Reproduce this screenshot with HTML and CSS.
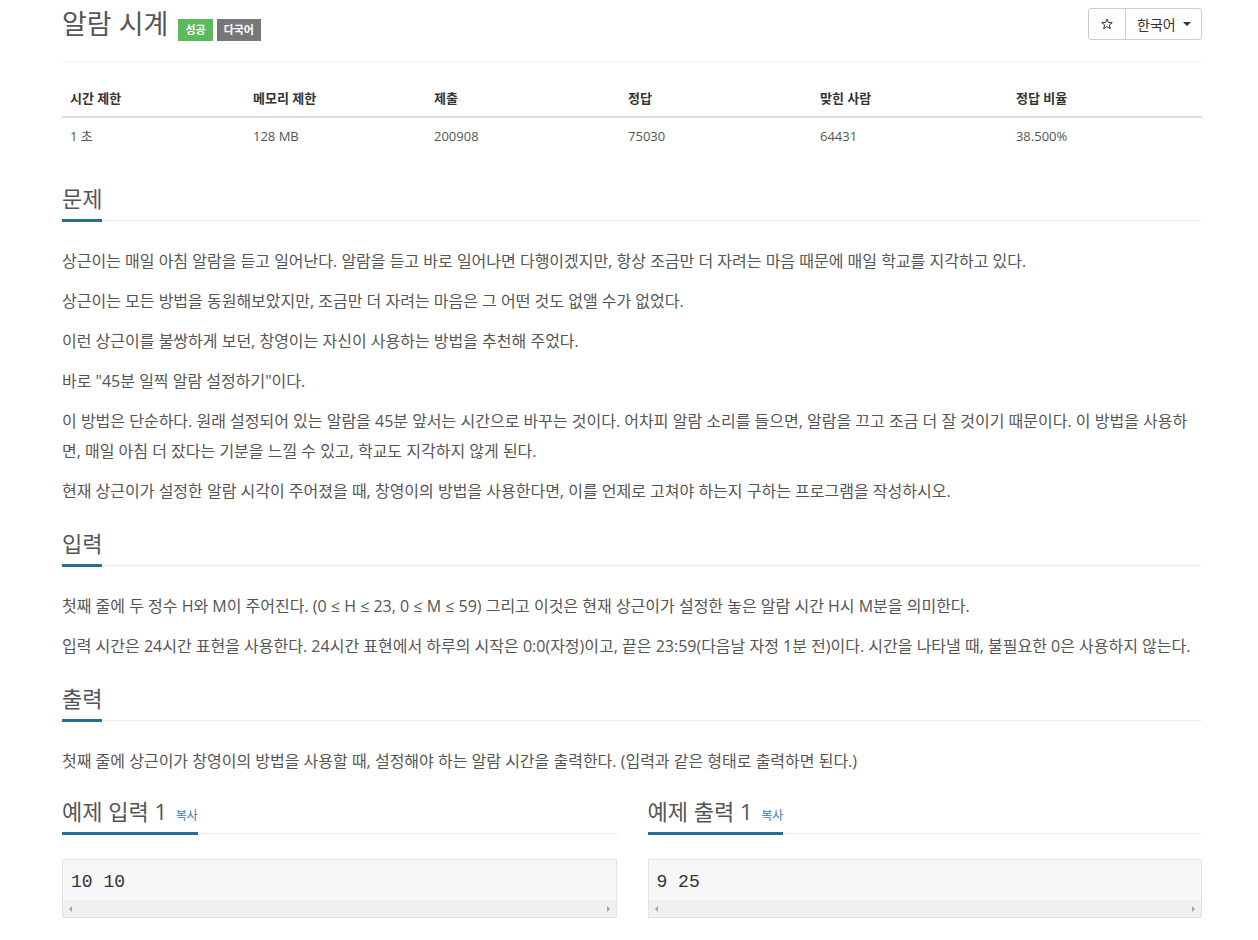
FILE: index.html
```html
<!DOCTYPE html>
<html lang="ko">
<head>
<meta charset="utf-8">
<title>알람 시계</title>
<link rel="stylesheet" href="styles.css">
</head>
<body>
<div class="container">
  <div class="page-header">
    <div class="title-wrap">
      <h1 class="title">알람 시계</h1>
      <span class="label label-success">성공</span>
      <span class="label label-default">다국어</span>
    </div>
    <div class="btn-group">
      <button class="btn btn-star" type="button">
        <svg width="14" height="14" viewBox="0 0 24 24"><polygon points="12,2 14.9,9 22.5,9.3 16.6,14 18.6,21.4 12,17.2 5.4,21.4 7.4,14 1.5,9.3 9.1,9" fill="none" stroke="#333" stroke-width="2" stroke-linejoin="round"/></svg>
      </button>
      <button class="btn btn-lang" type="button">한국어 <span class="caret"></span></button>
    </div>
  </div>

  <table class="info-table">
    <thead>
      <tr>
        <th class="c1">시간 제한</th>
        <th class="c2">메모리 제한</th>
        <th class="c3">제출</th>
        <th class="c4">정답</th>
        <th class="c5">맞힌 사람</th>
        <th class="c6">정답 비율</th>
      </tr>
    </thead>
    <tbody>
      <tr>
        <td>1 초</td>
        <td>128 MB</td>
        <td>200908</td>
        <td>75030</td>
        <td>64431</td>
        <td>38.500%</td>
      </tr>
    </tbody>
  </table>

  <section class="section">
    <div class="headline"><h2>문제</h2></div>
    <div class="problem-text">
      <p>상근이는 매일 아침 알람을 듣고 일어난다. 알람을 듣고 바로 일어나면 다행이겠지만, 항상 조금만 더 자려는 마음 때문에 매일 학교를 지각하고 있다.</p>
      <p>상근이는 모든 방법을 동원해보았지만, 조금만 더 자려는 마음은 그 어떤 것도 없앨 수가 없었다.</p>
      <p>이런 상근이를 불쌍하게 보던, 창영이는 자신이 사용하는 방법을 추천해 주었다.</p>
      <p>바로 "45분 일찍 알람 설정하기"이다.</p>
      <p>이 방법은 단순하다. 원래 설정되어 있는 알람을 45분 앞서는 시간으로 바꾸는 것이다. 어차피 알람 소리를 들으면, 알람을 끄고 조금 더 잘 것이기 때문이다. 이 방법을 사용하면, 매일 아침 더 잤다는 기분을 느낄 수 있고, 학교도 지각하지 않게 된다.</p>
      <p>현재 상근이가 설정한 알람 시각이 주어졌을 때, 창영이의 방법을 사용한다면, 이를 언제로 고쳐야 하는지 구하는 프로그램을 작성하시오.</p>
    </div>
  </section>

  <section class="section">
    <div class="headline"><h2>입력</h2></div>
    <div class="problem-text">
      <p>첫째 줄에 두 정수 H와 M이 주어진다. (0 ≤ H ≤ 23, 0 ≤ M ≤ 59) 그리고 이것은 현재 상근이가 설정한 놓은 알람 시간 H시 M분을 의미한다.</p>
      <p>입력 시간은 24시간 표현을 사용한다. 24시간 표현에서 하루의 시작은 0:0(자정)이고, 끝은 23:59(다음날 자정 1분 전)이다. 시간을 나타낼 때, 불필요한 0은 사용하지 않는다.</p>
    </div>
  </section>

  <section class="section">
    <div class="headline"><h2>출력</h2></div>
    <div class="problem-text">
      <p>첫째 줄에 상근이가 창영이의 방법을 사용할 때, 설정해야 하는 알람 시간을 출력한다. (입력과 같은 형태로 출력하면 된다.)</p>
    </div>
  </section>

  <div class="examples">
    <section class="example">
      <div class="headline"><h2 class="ex-title">예제 입력 1 <span class="copy">복사</span></h2></div>
      <div class="sample">
        <pre class="sample-data">10 10</pre>
        <div class="hscroll"><span class="arr arr-left"></span><span class="arr arr-right"></span></div>
      </div>
    </section>
    <section class="example">
      <div class="headline"><h2 class="ex-title">예제 출력 1 <span class="copy">복사</span></h2></div>
      <div class="sample">
        <pre class="sample-data">9 25</pre>
        <div class="hscroll"><span class="arr arr-left"></span><span class="arr arr-right"></span></div>
      </div>
    </section>
  </div>
</div>
</body>
</html>
```

FILE: styles.css
```css
* { box-sizing: border-box; }

body {
  margin: 0;
  background: #fff;
  color: #555;
  font-family: "Open Sans", "Noto Sans CJK KR", sans-serif;
  font-size: 14px;
}

.container {
  width: 1140px;
  margin-left: 62px;
}

/* header */
.page-header {
  display: flex;
  justify-content: space-between;
  align-items: flex-start;
  height: 62px;
  padding-top: 8px;
  border-bottom: 1px solid #eee;
}

.title-wrap {
  display: flex;
  align-items: baseline;
}

.title {
  margin: 0;
  font-size: 27px;
  font-weight: 400;
  line-height: 32px;
  color: #555;
}

.label {
  display: inline-block;
  margin-left: 10px;
  padding: 4px 7px;
  font-size: 11px;
  font-weight: 700;
  line-height: 14px;
  color: #fff;
}
.label + .label { margin-left: 4px; }
.label-success { background: #5cb85c; }
.label-default { background: #777; }

.btn-group { display: flex; }

.btn {
  height: 32px;
  margin: 0;
  padding: 0 12px;
  border: 1px solid #ccc;
  background: #fff;
  color: #333;
  font-family: "Open Sans", "Noto Sans CJK KR", sans-serif;
  font-size: 14px;
  display: flex;
  align-items: center;
}
.btn-star {
  width: 38px;
  justify-content: center;
  border-radius: 3px 0 0 3px;
}
.btn-lang {
  width: 77px;
  margin-left: -1px;
  border-radius: 0 3px 3px 0;
  padding: 0 10px 0 11px;
  justify-content: space-between;
}
.caret {
  display: inline-block;
  width: 0;
  height: 0;
  border-top: 4px solid #333;
  border-left: 4px solid transparent;
  border-right: 4px solid transparent;
}

/* info table */
.info-table {
  width: 100%;
  margin-top: 18px;
  margin-bottom: 29px;
  border-collapse: collapse;
  font-size: 13px;
}
.info-table th,
.info-table td {
  padding: 8px;
  line-height: 20px;
  text-align: left;
}
.info-table th {
  color: #333;
  font-weight: 700;
  border-bottom: 2px solid #ddd;
}
.info-table td { color: #555; }
.c1 { width: 16.05%; }
.c2 { width: 15.88%; }
.c3 { width: 17.02%; }
.c4 { width: 16.84%; }
.c5 { width: 17.19%; }
.c6 { width: 17.02%; }

/* sections */
.section { margin-top: 22px; }

.headline {
  border-bottom: 1px dotted #ddd;
}
.headline h2 {
  display: inline-block;
  margin: 0 0 -2px;
  padding-bottom: 6px;
  border-bottom: 3px solid #23708f;
  font-size: 22px;
  font-weight: 400;
  line-height: 30px;
  color: #555;
}

.problem-text { margin-top: 25px; }
.problem-text p {
  margin: 0 0 10px;
  font-size: 16px;
  line-height: 30px;
  color: #555;
}

/* examples */
.examples {
  display: flex;
  gap: 31px;
  margin-top: 20px;
}
.example { flex: 1; }

.headline .ex-title { font-size: 22px; }
.copy {
  font-size: 12px;
  line-height: 12px;
  color: #3b7cb2;
  margin-left: 3px;
}

.sample {
  margin-top: 25px;
  border: 1px solid #e3e3e3;
  background: #f7f7f9;
}
.sample-data {
  margin: 0;
  padding: 10px 8px 6px;
  font-family: "Liberation Mono", monospace;
  font-size: 18px;
  line-height: 24px;
  color: #333;
}
.hscroll {
  height: 17px;
  background: #f0f0f0;
  display: flex;
  justify-content: space-between;
  align-items: center;
  padding: 0 6px;
}
.arr {
  width: 0;
  height: 0;
  border-top: 3px solid transparent;
  border-bottom: 3px solid transparent;
}
.arr-left { border-right: 3px solid #a3a3a3; }
.arr-right { border-left: 3px solid #a3a3a3; }
```
